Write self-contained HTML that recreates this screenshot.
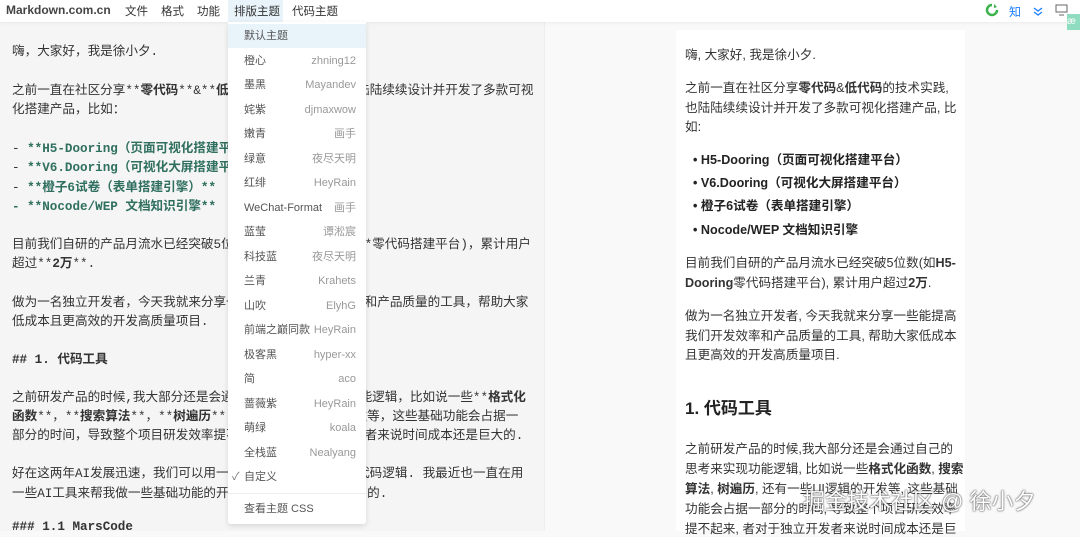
<!DOCTYPE html>
<html><head><meta charset="utf-8">
<style>
*{margin:0;padding:0;box-sizing:border-box}
body{width:1080px;height:531px;overflow:hidden;background:#f9f9f9;font-family:"Liberation Sans","Noto Sans CJK SC",sans-serif;position:relative}
.top{position:absolute;left:0;top:0;width:1080px;height:22px;background:#fff;box-shadow:0 1px 3px rgba(0,0,0,.06);z-index:2}
.top span{position:absolute;top:3px;font-size:11.5px;color:#333}
.left{position:absolute;left:0;top:22px;width:545px;height:509px;background:#f5f5f5;border-right:1px solid #eee}
.l{position:absolute;left:12px;font-family:"Liberation Mono","Noto Sans CJK SC",monospace;font-size:12.6px;color:#333;white-space:nowrap;letter-spacing:0}
.g{color:#2f6f5e;font-weight:bold}
.card{position:absolute;left:676px;top:30px;width:289px;height:501px;background:#fff}
.r{position:absolute;left:685px;font-size:12.6px;color:#333;white-space:nowrap}
.li{position:absolute;left:693px;font-family:"Liberation Sans","Noto Sans CJK SC",sans-serif;font-weight:bold;font-size:12.6px;color:#222;white-space:nowrap}
.menu{position:absolute;left:228px;top:22px;width:138px;height:502px;background:#fff;box-shadow:0 2px 6px rgba(0,0,0,.12);border-radius:0 0 3px 3px;z-index:3}
.it{position:absolute;left:16px;right:10px;font-size:11px;color:#555;height:16px;line-height:16px;display:flex;justify-content:space-between;white-space:nowrap}
.it b{font-weight:normal;color:#999}
</style></head><body>
<div class="top">
<span style="left:6px;font-weight:bold;color:#444;font-size:12px">Markdown.com.cn</span>
<span style="left:125px">文件</span><span style="left:161px">格式</span><span style="left:197px">功能</span>
<span style="left:228px;top:0;height:22px;width:55px;background:#e8f3fa"></span>
<span style="left:234px">排版主题</span><span style="left:292px">代码主题</span>
<svg style="position:absolute;left:985px;top:3px" width="14" height="14" viewBox="0 0 14 14"><path d="M7 2a5 5 0 1 0 5 5" stroke="#3bb34a" stroke-width="2.5" fill="none"/><path d="M9 1l3 3-3 1z" fill="#3bb34a"/></svg>
<span style="left:1009px;color:#1e80ff;font-size:12px">知</span>
<svg style="position:absolute;left:1032px;top:5px" width="12" height="12" viewBox="0 0 12 12"><path d="M2 3l4 3 4-3M2 7l4 3 4-3" stroke="#1e80ff" fill="none" stroke-width="1.3"/></svg>
<svg style="position:absolute;left:1055px;top:4px" width="13" height="12" viewBox="0 0 13 12"><rect x="1" y="1" width="11" height="7" stroke="#666" fill="none"/><path d="M4 11h5" stroke="#666"/></svg>
</div>
<div style="position:absolute;left:1067px;top:14px;width:13px;height:16px;background:#8fdcc0;z-index:3;color:#fff;font-size:10px;line-height:16px">æ</div>
<div class="left">
<div class="l" style="top:18px">嗨，大家好，我是徐小夕.</div>
<div class="l" style="top:57px">之前一直在社区分享**<b>零代码</b>**&amp;**<b>低代码</b>**的技术实践，也陆陆续续设计并开发了多款可视</div>
<div class="l" style="top:76px">化搭建产品，比如：</div>
<div class="l" style="top:115px">-  <span class="g">**H5-Dooring（页面可视化搭建平台）**</span></div>
<div class="l" style="top:134px">-  <span class="g">**V6.Dooring（可视化大屏搭建平台）**</span></div>
<div class="l" style="top:154px">-  <span class="g">**橙子6试卷（表单搭建引擎）**</span></div>
<div class="l" style="top:173px"><span class="g">- **Nocode/WEP 文档知识引擎**</span></div>
<div class="l" style="top:211px">目前我们自研的产品月流水已经突破5位数(如**H5-Dooring**零代码搭建平台)，累计用户</div>
<div class="l" style="top:230px">超过**<b>2万</b>**.</div>
<div class="l" style="top:269px">做为一名独立开发者，今天我就来分享一些能提高我们开发效率和产品质量的工具，帮助大家</div>
<div class="l" style="top:288px">低成本且更高效的开发高质量项目.</div>
<div class="l" style="top:326px;font-weight:bold">## 1. 代码工具</div>
<div class="l" style="top:364px">之前研发产品的时候,我大部分还是会通过自己的思考来实现功能逻辑，比如说一些**<b>格式化</b></div>
<div class="l" style="top:383px"><b>函数</b>**，**<b>搜索算法</b>**，**<b>树遍历</b>**，还有一些UI逻辑的开发等，这些基础功能会占据一</div>
<div class="l" style="top:402px">部分的时间，导致整个项目研发效率提不起来，者对于独立开发者来说时间成本还是巨大的.</div>
<div class="l" style="top:440px">好在这两年AI发展迅速，我们可以用一些AI工具来辅助我们写代码逻辑. 我最近也一直在用</div>
<div class="l" style="top:460px">一些AI工具来帮我做一些基础功能的开发，下面分享几款我常用的.</div>
<div class="l" style="top:498px;font-weight:bold">### 1.1 MarsCode</div>
</div>
<div class="card"></div>
<div class="r" style="top:44px">嗨, 大家好, 我是徐小夕.</div>
<div class="r" style="top:77px">之前一直在社区分享<b>零代码</b>&amp;<b>低代码</b>的技术实践,</div>
<div class="r" style="top:97px">也陆陆续续设计并开发了多款可视化搭建产品, 比</div>
<div class="r" style="top:116px">如:</div>
<div class="li" style="top:149px">• H5-Dooring（页面可视化搭建平台）</div>
<div class="li" style="top:172px">• V6.Dooring（可视化大屏搭建平台）</div>
<div class="li" style="top:195px">• 橙子6试卷（表单搭建引擎）</div>
<div class="li" style="top:219px">• Nocode/WEP 文档知识引擎</div>
<div class="r" style="top:252px">目前我们自研的产品月流水已经突破5位数(如<b>H5-</b></div>
<div class="r" style="top:272px"><b>Dooring</b>零代码搭建平台), 累计用户超过<b>2万</b>.</div>
<div class="r" style="top:305px">做为一名独立开发者, 今天我就来分享一些能提高</div>
<div class="r" style="top:325px">我们开发效率和产品质量的工具, 帮助大家低成本</div>
<div class="r" style="top:344px">且更高效的开发高质量项目.</div>
<div class="r" style="top:394px;font-size:17px;font-weight:bold;color:#222">1. 代码工具</div>
<div class="r" style="top:438px">之前研发产品的时候,我大部分还是会通过自己的</div>
<div class="r" style="top:458px">思考来实现功能逻辑, 比如说一些<b>格式化函数</b>, <b>搜索</b></div>
<div class="r" style="top:478px"><b>算法</b>, <b>树遍历</b>, 还有一些UI逻辑的开发等, 这些基础</div>
<div class="r" style="top:498px">功能会占据一部分的时间, 导致整个项目研发效率</div>
<div class="r" style="top:518px">提不起来, 者对于独立开发者来说时间成本还是巨</div>
<div style="position:absolute;left:803px;top:484px;font-size:22px;color:#fff;text-shadow:0 0 2px #555,0 0 1px #333;white-space:nowrap;z-index:4">掘金技术社区 @ 徐小夕</div>
<div class="menu">
<div style="position:absolute;left:0;right:0;top:2px;height:24px;background:#e8f3fa"></div>
<div class="it" style="top:6px">默认主题</div>
<div class="it" style="top:31px">橙心<b>zhning12</b></div>
<div class="it" style="top:55px">墨黑<b>Mayandev</b></div>
<div class="it" style="top:80px">姹紫<b>djmaxwow</b></div>
<div class="it" style="top:104px">嫩青<b>画手</b></div>
<div class="it" style="top:129px">绿意<b>夜尽天明</b></div>
<div class="it" style="top:153px">红绯<b>HeyRain</b></div>
<div class="it" style="top:178px">WeChat-Format<b>画手</b></div>
<div class="it" style="top:202px">蓝莹<b>谭淞宸</b></div>
<div class="it" style="top:227px">科技蓝<b>夜尽天明</b></div>
<div class="it" style="top:251px">兰青<b>Krahets</b></div>
<div class="it" style="top:276px">山吹<b>ElyhG</b></div>
<div class="it" style="top:300px">前端之巅同款<b>HeyRain</b></div>
<div class="it" style="top:325px">极客黑<b>hyper-xx</b></div>
<div class="it" style="top:349px">简<b>aco</b></div>
<div class="it" style="top:374px">蔷薇紫<b>HeyRain</b></div>
<div class="it" style="top:398px">萌绿<b>koala</b></div>
<div class="it" style="top:423px">全栈蓝<b>Nealyang</b></div>
<div class="it" style="top:447px"><span><span style="position:absolute;left:-12px;color:#777">✓</span>自定义</span></div>
<div style="position:absolute;left:0;right:0;top:471px;border-top:1px solid #eee"></div>
<div class="it" style="top:479px">查看主题 CSS</div>
</div>
</body></html>
